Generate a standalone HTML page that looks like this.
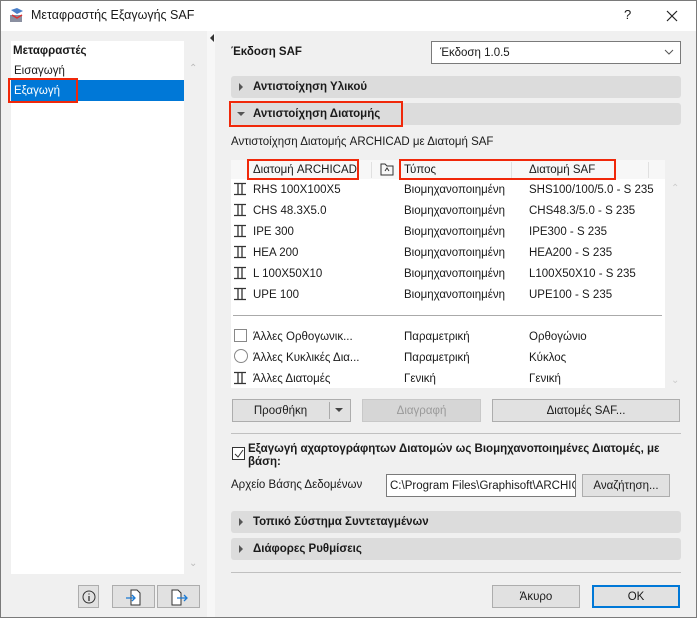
<!DOCTYPE html>
<html><head><meta charset="utf-8"><style>
*{margin:0;padding:0;box-sizing:border-box}
body{width:697px;height:618px;overflow:hidden;background:#f0f0f0;font-family:"Liberation Sans","DejaVu Sans",sans-serif;font-size:11.5px;color:#1a1a1a;position:relative}
.a{position:absolute;white-space:nowrap}
.frame{position:absolute;left:0;top:0;width:697px;height:618px;border:1px solid #7a7a7a;pointer-events:none}
.bar{position:absolute;background:#dcdcdc;border-radius:3px;height:22px;font-weight:bold;padding-left:22px;line-height:23px}
.bar:before{content:"";position:absolute;left:8px;top:7px;border-left:4px solid #555;border-top:4px solid transparent;border-bottom:4px solid transparent}
.bar.open:before{left:6px;top:9px;border-top:4px solid #555;border-left:4px solid transparent;border-right:4px solid transparent;border-bottom:0}
.btn{position:absolute;background:#e1e1e1;border:1px solid #adadad;height:23px;text-align:center;line-height:22px}
.red{position:absolute;border:2px solid #f0280a}
.ib{position:absolute;width:14px;height:14px}
.row span{position:absolute}
</style></head><body>
<div class="a" style="left:0;top:0;width:697px;height:31px;background:#fff"></div>
<svg class="a" style="left:8px;top:7px" width="18" height="18" viewBox="0 0 18 18"><rect x="2" y="8" width="12" height="7" fill="#8a8fa0"/><path d="M3 3l6-2 6 3-6 3z" fill="#4a7fc8"/><path d="M4 8l5 3 5-3" stroke="#d33" fill="none" stroke-width="1.5"/></svg>
<div class="a" style="left:31px;top:8px;font-size:12.5px">Μεταφραστής Εξαγωγής SAF</div>
<div class="a" style="left:624px;top:7px;font-size:13px">?</div>
<svg class="a" style="left:666px;top:10px" width="12" height="12"><path d="M1 1L11 11M11 1L1 11" stroke="#222" stroke-width="1.2"/></svg>

<div class="a" style="left:11px;top:41px;width:173px;height:533px;background:#fff"></div>
<div class="a" style="left:13px;top:45px;font-weight:bold">Μεταφραστές</div>
<div class="a" style="left:14px;top:65px">Εισαγωγή</div>
<div class="a" style="left:11px;top:80px;width:173px;height:21px;background:#0078d7"></div>
<div class="a" style="left:14px;top:85px;color:#fff">Εξαγωγή</div>
<div class="red" style="left:8px;top:78px;width:70px;height:25px"></div>
<div class="a" style="left:189px;top:63px;color:#bbb;font-size:10px">⌃</div>
<div class="a" style="left:189px;top:558px;color:#bbb;font-size:10px">⌄</div>
<div class="a" style="left:207px;top:31px;width:8px;height:587px;background:#f7f7f7"></div>
<div class="a" style="left:210px;top:34px;border-right:4px solid #333;border-top:4px solid transparent;border-bottom:4px solid transparent"></div>
<div class="btn" style="left:78px;top:585px;width:21px"><svg width="14" height="14" style="margin-top:4px"><circle cx="7" cy="7" r="6" fill="none" stroke="#333"/><path d="M7 6v5M7 3.5v1" stroke="#333" stroke-width="1.3"/></svg></div>
<div class="btn" style="left:112px;top:585px;width:43px"><svg width="20" height="18" style="margin-top:2px"><path d="M7 2h6l3 3v12H7z" fill="#fff" stroke="#333"/><path d="M2 10h9M8 7l3 3-3 3" stroke="#1b7ad4" fill="none" stroke-width="1.3"/></svg></div>
<div class="btn" style="left:157px;top:585px;width:43px"><svg width="20" height="18" style="margin-top:2px"><path d="M3 2h6l3 3v12H3z" fill="#fff" stroke="#333"/><path d="M8 10h10M15 7l3 3-3 3" stroke="#1b7ad4" fill="none" stroke-width="1.3"/></svg></div>

<div class="a" style="left:231px;top:46px;font-weight:bold">Έκδοση SAF</div>
<div class="a" style="left:431px;top:41px;width:250px;height:23px;background:#fff;border:1px solid #7a7a7a;padding:5px 0 0 8px">Έκδοση 1.0.5</div>
<svg class="a" style="left:664px;top:49px" width="10" height="6"><path d="M1 1l4 4 4-4" stroke="#555" fill="none"/></svg>
<div class="bar" style="left:231px;top:76px;width:450px">Αντιστοίχηση Υλικού</div>
<div class="bar open" style="left:231px;top:103px;width:450px">Αντιστοίχηση Διατομής</div>
<div class="red" style="left:229px;top:101px;width:174px;height:26px"></div>
<div class="a" style="left:231px;top:136px">Αντιστοίχηση Διατομής ARCHICAD με Διατομή SAF</div>

<div class="a" style="left:231px;top:160px;width:434px;height:228px;background:#fff"></div>
<div class="a" style="left:231px;top:160px;width:434px;height:19px;background:#f7f7f7"></div>
<div class="a" style="left:371px;top:162px;width:1px;height:16px;background:#e0e0e0"></div>
<div class="a" style="left:511px;top:162px;width:1px;height:16px;background:#e0e0e0"></div>
<div class="a" style="left:648px;top:162px;width:1px;height:16px;background:#e0e0e0"></div>
<div class="a" style="left:253px;top:164px">Διατομή ARCHICAD</div>
<svg class="a" style="left:380px;top:162px" width="14" height="14"><path d="M1 13V2h4l2 2h6v9z" fill="none" stroke="#333"/><path d="M5 9l2-3 2 3" stroke="#333" fill="none"/></svg>
<div class="a" style="left:404px;top:164px">Τύπος</div>
<div class="a" style="left:529px;top:164px">Διατομή SAF</div>
<div class="red" style="left:247px;top:159px;width:112px;height:21px"></div>
<div class="red" style="left:399px;top:159px;width:217px;height:21px"></div>
<div class="a" style="left:671px;top:183px;color:#ccc;font-size:10px">⌃</div>
<div class="a" style="left:671px;top:375px;color:#ccc;font-size:10px">⌄</div>
<div class="a" style="left:233px;top:315px;width:429px;height:1px;background:#aaa"></div>

<svg width="0" height="0" style="position:absolute"><defs><symbol id="ib" viewBox="0 0 14 14"><path d="M1 1.5h12M1 12.5h12M5 1.5v11M9 1.5v11" stroke="#333" stroke-width="1.3" fill="none"/></symbol></defs></svg>
<div class="row">
<svg class="ib" style="left:233px;top:182px"><use href="#ib"/></svg><span class="a" style="left:253px;top:184px">RHS 100X100X5</span><span class="a" style="left:404px;top:184px">Βιομηχανοποιημένη</span><span class="a" style="left:529px;top:184px">SHS100/100/5.0 - S 235</span>
<svg class="ib" style="left:233px;top:203px"><use href="#ib"/></svg><span class="a" style="left:253px;top:205px">CHS 48.3X5.0</span><span class="a" style="left:404px;top:205px">Βιομηχανοποιημένη</span><span class="a" style="left:529px;top:205px">CHS48.3/5.0 - S 235</span>
<svg class="ib" style="left:233px;top:224px"><use href="#ib"/></svg><span class="a" style="left:253px;top:226px">IPE 300</span><span class="a" style="left:404px;top:226px">Βιομηχανοποιημένη</span><span class="a" style="left:529px;top:226px">IPE300 - S 235</span>
<svg class="ib" style="left:233px;top:245px"><use href="#ib"/></svg><span class="a" style="left:253px;top:247px">HEA 200</span><span class="a" style="left:404px;top:247px">Βιομηχανοποιημένη</span><span class="a" style="left:529px;top:247px">HEA200 - S 235</span>
<svg class="ib" style="left:233px;top:266px"><use href="#ib"/></svg><span class="a" style="left:253px;top:268px">L 100X50X10</span><span class="a" style="left:404px;top:268px">Βιομηχανοποιημένη</span><span class="a" style="left:529px;top:268px">L100X50X10 - S 235</span>
<svg class="ib" style="left:233px;top:287px"><use href="#ib"/></svg><span class="a" style="left:253px;top:289px">UPE 100</span><span class="a" style="left:404px;top:289px">Βιομηχανοποιημένη</span><span class="a" style="left:529px;top:289px">UPE100 - S 235</span>
<div class="a" style="left:234px;top:329px;width:13px;height:13px;border:1px solid #888"></div><span class="a" style="left:253px;top:331px">Άλλες Ορθογωνικ...</span><span class="a" style="left:404px;top:331px">Παραμετρική</span><span class="a" style="left:529px;top:331px">Ορθογώνιο</span>
<div class="a" style="left:234px;top:349px;width:14px;height:14px;border:1px solid #888;border-radius:50%"></div><span class="a" style="left:253px;top:352px">Άλλες Κυκλικές Δια...</span><span class="a" style="left:404px;top:352px">Παραμετρική</span><span class="a" style="left:529px;top:352px">Κύκλος</span>
<svg class="ib" style="left:233px;top:371px"><use href="#ib"/></svg><span class="a" style="left:253px;top:373px">Άλλες Διατομές</span><span class="a" style="left:404px;top:373px">Γενική</span><span class="a" style="left:529px;top:373px">Γενική</span>
</div>

<div class="btn" style="left:232px;top:399px;width:119px;padding-right:22px">Προσθήκη</div>
<div class="a" style="left:329px;top:402px;width:1px;height:17px;background:#aaa"></div>
<div class="a" style="left:335px;top:408px;border-top:4px solid #444;border-left:4px solid transparent;border-right:4px solid transparent"></div>
<div class="btn" style="left:362px;top:399px;width:119px;background:#d6d6d6;border-color:#c8c8c8;color:#9a9a9a">Διαγραφή</div>
<div class="btn" style="left:492px;top:399px;width:188px">Διατομές SAF...</div>
<div class="a" style="left:231px;top:433px;width:450px;height:1px;background:#c0c0c0"></div>
<div class="a" style="left:232px;top:447px;width:13px;height:13px;border:1px solid #333;background:#fff"></div>
<svg class="a" style="left:233px;top:448px" width="11" height="11"><path d="M2 6l3 3 5-7" stroke="#333" fill="none"/></svg>
<div class="a" style="left:248px;top:443px;font-weight:bold;line-height:13px;white-space:normal;width:420px">Εξαγωγή αχαρτογράφητων Διατομών ως Βιομηχανοποιημένες Διατομές, με βάση:</div>
<div class="a" style="left:231px;top:479px">Αρχείο Βάσης Δεδομένων</div>
<div class="a" style="left:386px;top:474px;width:190px;height:23px;background:#fff;border:1px solid #7a7a7a;padding:5px 0 0 3px;overflow:hidden">C:\Program Files\Graphisoft\ARCHICAD</div>
<div class="btn" style="left:582px;top:474px;width:88px">Αναζήτηση...</div>
<div class="bar" style="left:231px;top:511px;width:450px">Τοπικό Σύστημα Συντεταγμένων</div>
<div class="bar" style="left:231px;top:538px;width:450px">Διάφορες Ρυθμίσεις</div>
<div class="a" style="left:231px;top:572px;width:450px;height:1px;background:#c0c0c0"></div>
<div class="btn" style="left:492px;top:585px;width:88px">Άκυρο</div>
<div class="btn" style="left:592px;top:585px;width:88px;border:2px solid #0078d7;line-height:20px">OK</div>
<div class="frame"></div>
</body></html>
